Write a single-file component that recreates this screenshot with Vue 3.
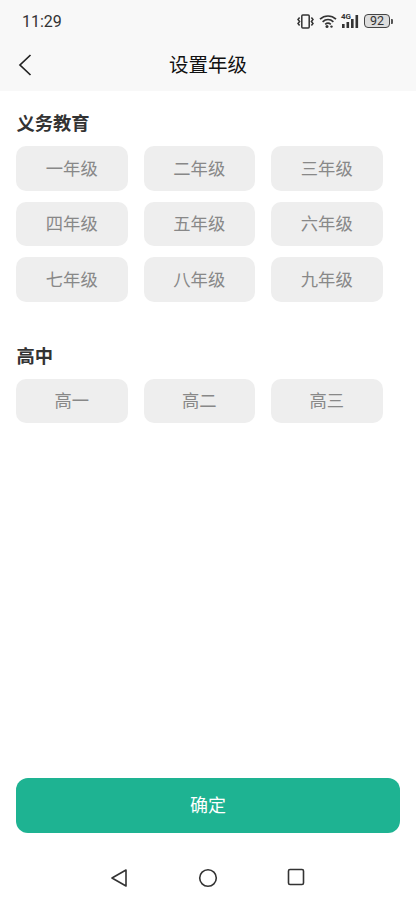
<template>
  <div class="page">
    <header class="top">
      <div class="status">
        <span class="time">11:29</span>
        <div class="status-icons">
          <svg width="17" height="15" viewBox="0 0 17 15" fill="none" stroke="#333" stroke-width="1.5">
            <rect x="4.800" y="1" width="7.400" height="13" rx="1" />
            <path d="M2.600 3.500 1 5.500l1.600 2L1 9.500l1.600 2M14.400 3.500 16 5.500l-1.600 2 1.600 2-1.600 2" />
          </svg>
          <svg class="wifi" width="19" height="14" viewBox="0 0 19 14" fill="none" stroke="#333" stroke-width="1.700">
            <path d="M1 5.200C5.600.900 12.400.900 17 5.200M3.600 7.800c3.200-2.800 7.600-2.800 10.800 0M6.200 10.300c1.700-1.400 3.900-1.400 5.600 0" />
            <circle cx="8" cy="12.400" r="1.500" fill="#333" stroke="none" />
            <circle cx="12.500" cy="12.600" r="1.200" fill="#333" stroke="none" />
          </svg>
          <div class="signal">
            <span class="net">4G</span>
            <svg width="20" height="14" viewBox="0 0 20 14" fill="#333">
              <rect x="1" y="10" width="2.600" height="4" />
              <rect x="5.500" y="8" width="2.600" height="6" />
              <rect x="10" y="5" width="2.600" height="9" />
              <rect x="14.500" y="1" width="2.600" height="13" />
            </svg>
          </div>
          <div class="battery"><span class="battery-num">92</span></div>
          <span class="battery-tip"></span>
        </div>
      </div>
      <div class="nav-bar">
        <svg class="back" width="14" height="22" viewBox="0 0 14 22" fill="none" stroke="#222" stroke-width="1.700">
          <path d="M12.500 1 2 11l10.500 10" />
        </svg>
        <h1 class="title">设置年级</h1>
      </div>
    </header>

    <main class="content">
      <section v-for="group in groups" :key="group.name" class="group">
        <h2 class="group-name">{{ group.name }}</h2>
        <div class="grade-grid">
          <div v-for="grade in group.grades" :key="grade" class="grade">{{ grade }}</div>
        </div>
      </section>
    </main>

    <button class="confirm" type="button">确定</button>

    <footer class="sys-nav">
      <svg width="18" height="20" viewBox="0 0 18 20" fill="none" stroke="#333" stroke-width="1.600" stroke-linejoin="round">
        <path d="M16 2 2 10l14 8z" />
      </svg>
      <svg width="20" height="20" viewBox="0 0 20 20" fill="none" stroke="#333" stroke-width="1.600">
        <circle cx="10" cy="10" r="8.300" />
      </svg>
      <svg width="18" height="18" viewBox="0 0 18 18" fill="none" stroke="#333" stroke-width="1.600">
        <rect x="1.500" y="1.500" width="15" height="15" rx="1.500" />
      </svg>
    </footer>
  </div>
</template>

<script setup>
const groups = [
  {
    name: '义务教育',
    grades: ['一年级', '二年级', '三年级', '四年级', '五年级', '六年级', '七年级', '八年级', '九年级']
  },
  {
    name: '高中',
    grades: ['高一', '高二', '高三']
  }
]
</script>

<style>
body {
  background: #fff;
}
</style>

<style scoped>
.page {
  width: 416px;
  height: 900px;
  display: flex;
  flex-direction: column;
  background: #fff;
  font-family: "Roboto", "Noto Sans CJK SC", sans-serif;
  overflow: hidden;
}

.top {
  height: 91px;
  background: #f8f8f8;
}

.status {
  height: 42px;
  padding: 0 23px 0 22px;
  display: flex;
  align-items: center;
  justify-content: space-between;
}

.time {
  font-size: 16px;
  color: #333;
}

.status-icons {
  display: flex;
  align-items: center;
  color: #333;
}

.wifi {
  margin-left: 5px;
}

.signal {
  position: relative;
  margin-left: 3px;
  width: 20px;
  height: 14px;
}

.net {
  position: absolute;
  left: 0;
  top: -1px;
  font-size: 8px;
  font-weight: 700;
  line-height: 8px;
}

.signal svg {
  display: block;
}

.battery {
  margin-left: 3px;
  width: 26px;
  height: 14px;
  box-sizing: border-box;
  border: 1.400px solid #444;
  border-radius: 4px;
  background: #ddd;
  display: flex;
  align-items: center;
  justify-content: center;
}

.battery-num {
  font-size: 12.500px;
  line-height: 12px;
  color: #333;
}

.battery-tip {
  width: 2px;
  height: 5px;
  margin-left: 1px;
  background: #555;
  border-radius: 0 1px 1px 0;
}

.nav-bar {
  position: relative;
  height: 46px;
  padding-bottom: 4px;
  box-sizing: border-box;
  display: flex;
  align-items: center;
  justify-content: center;
}

.back {
  position: absolute;
  left: 18px;
  top: 12px;
}

.title {
  margin: 0;
  font-size: 19.500px;
  font-weight: 400;
  color: #111;
}

.content {
  flex: 1;
  padding: 20px 16px 0;
}

.group {
  margin-bottom: 42px;
}

.group-name {
  margin: 0 0 9px 0.500px;
  font-size: 18.300px;
  line-height: 26px;
  font-weight: 700;
  color: #333;
}

.grade-grid {
  display: grid;
  grid-template-columns: repeat(3, 111.500px);
  column-gap: 16px;
  row-gap: 11px;
}

.grade {
  height: 44.500px;
  padding-bottom: 2px;
  box-sizing: border-box;
  border-radius: 10px;
  background: #eeeeee;
  display: flex;
  align-items: center;
  justify-content: center;
  font-size: 17.300px;
  color: #888;
}

.confirm {
  display: block;
  margin: 0 16px;
  width: 384px;
  height: 55px;
  padding: 0 0 4px;
  flex-shrink: 0;
  border: none;
  border-radius: 12px;
  background: #1eb392;
  color: #fff;
  font-family: inherit;
  font-size: 18px;
}

.sys-nav {
  height: 67px;
  flex-shrink: 0;
  padding: 35px 111px 0 110px;
  box-sizing: border-box;
  display: flex;
  align-items: flex-start;
  justify-content: space-between;
}
</style>
